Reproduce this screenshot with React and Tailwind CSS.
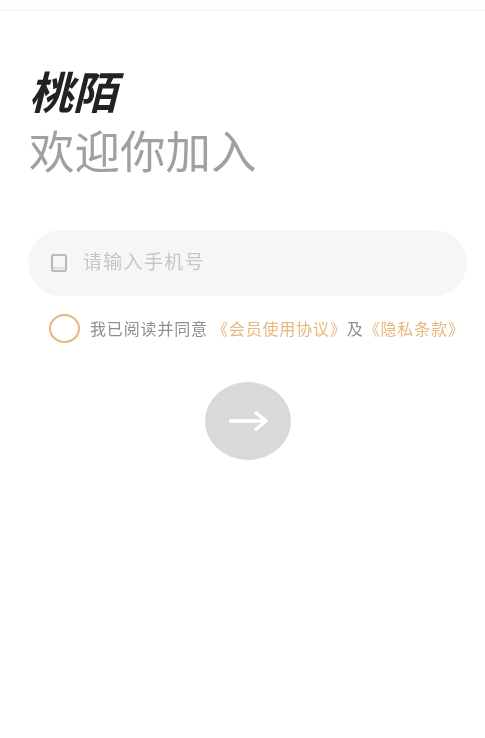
export default function App() {
    const font = { fontFamily: '"Noto Sans CJK SC", sans-serif' }
    return (
        <div className="flex flex-col h-[738px] bg-white blur-[0.6px]" style={font}>
            <div className="h-[11px] border-b border-[#f4f4f4] bg-[#fdfdfd]"></div>
            <div className="flex flex-col pl-[28px] pr-[18px]">
                <h1 className="mt-[54px] ml-[1px] text-[44px] leading-[50px] font-bold italic text-[#222222]">桃陌</h1>
                <h2 className="mt-[8px] ml-[1px] text-[45.5px] leading-[52px] text-[#a0a0a0]">欢迎你加入</h2>
                <div className="flex items-center h-[66px] mt-[55px] pl-[23px] rounded-full bg-[#f6f6f6]">
                    <svg width="16" height="18" viewBox="0 0 16 18" fill="none">
                        <rect x="1" y="1" width="14" height="16" rx="1" stroke="#a8a8a8" strokeWidth="1.6" />
                        <path d="M1 14h14" stroke="#c4c4c4" strokeWidth="1" />
                    </svg>
                    <span className="ml-[16px] mb-[3px] text-[19px] tracking-[1.3px] text-[#c6c6c6]">请输入手机号</span>
                </div>
                <div className="flex items-center mt-[17px] ml-[21px] h-[30px] whitespace-nowrap">
                    <div className="w-[31px] h-[29px] rounded-[50%] border-2 border-[#e9b77d] shrink-0"></div>
                    <p className="ml-[10px] text-[16px] tracking-[0.85px] leading-[30px] text-[#8f8f8f]">
                        我已阅读并同意
                        <span className="ml-[4px] text-[#e9b77d]">《会员使用协议》</span>
                        及
                        <span className="text-[#e9b77d]">《隐私条款》</span>
                    </p>
                </div>
                <button className="flex items-center justify-center self-center w-[86px] h-[78px] mt-[39px] rounded-[50%] bg-[#d9d9d9]">
                    <svg width="40" height="22" viewBox="0 0 40 22" fill="none">
                        <path d="M1 11h37M27 2l11 9-11 9" stroke="#ffffff" strokeWidth="3.4" />
                    </svg>
                </button>
            </div>
        </div>
    )
}
